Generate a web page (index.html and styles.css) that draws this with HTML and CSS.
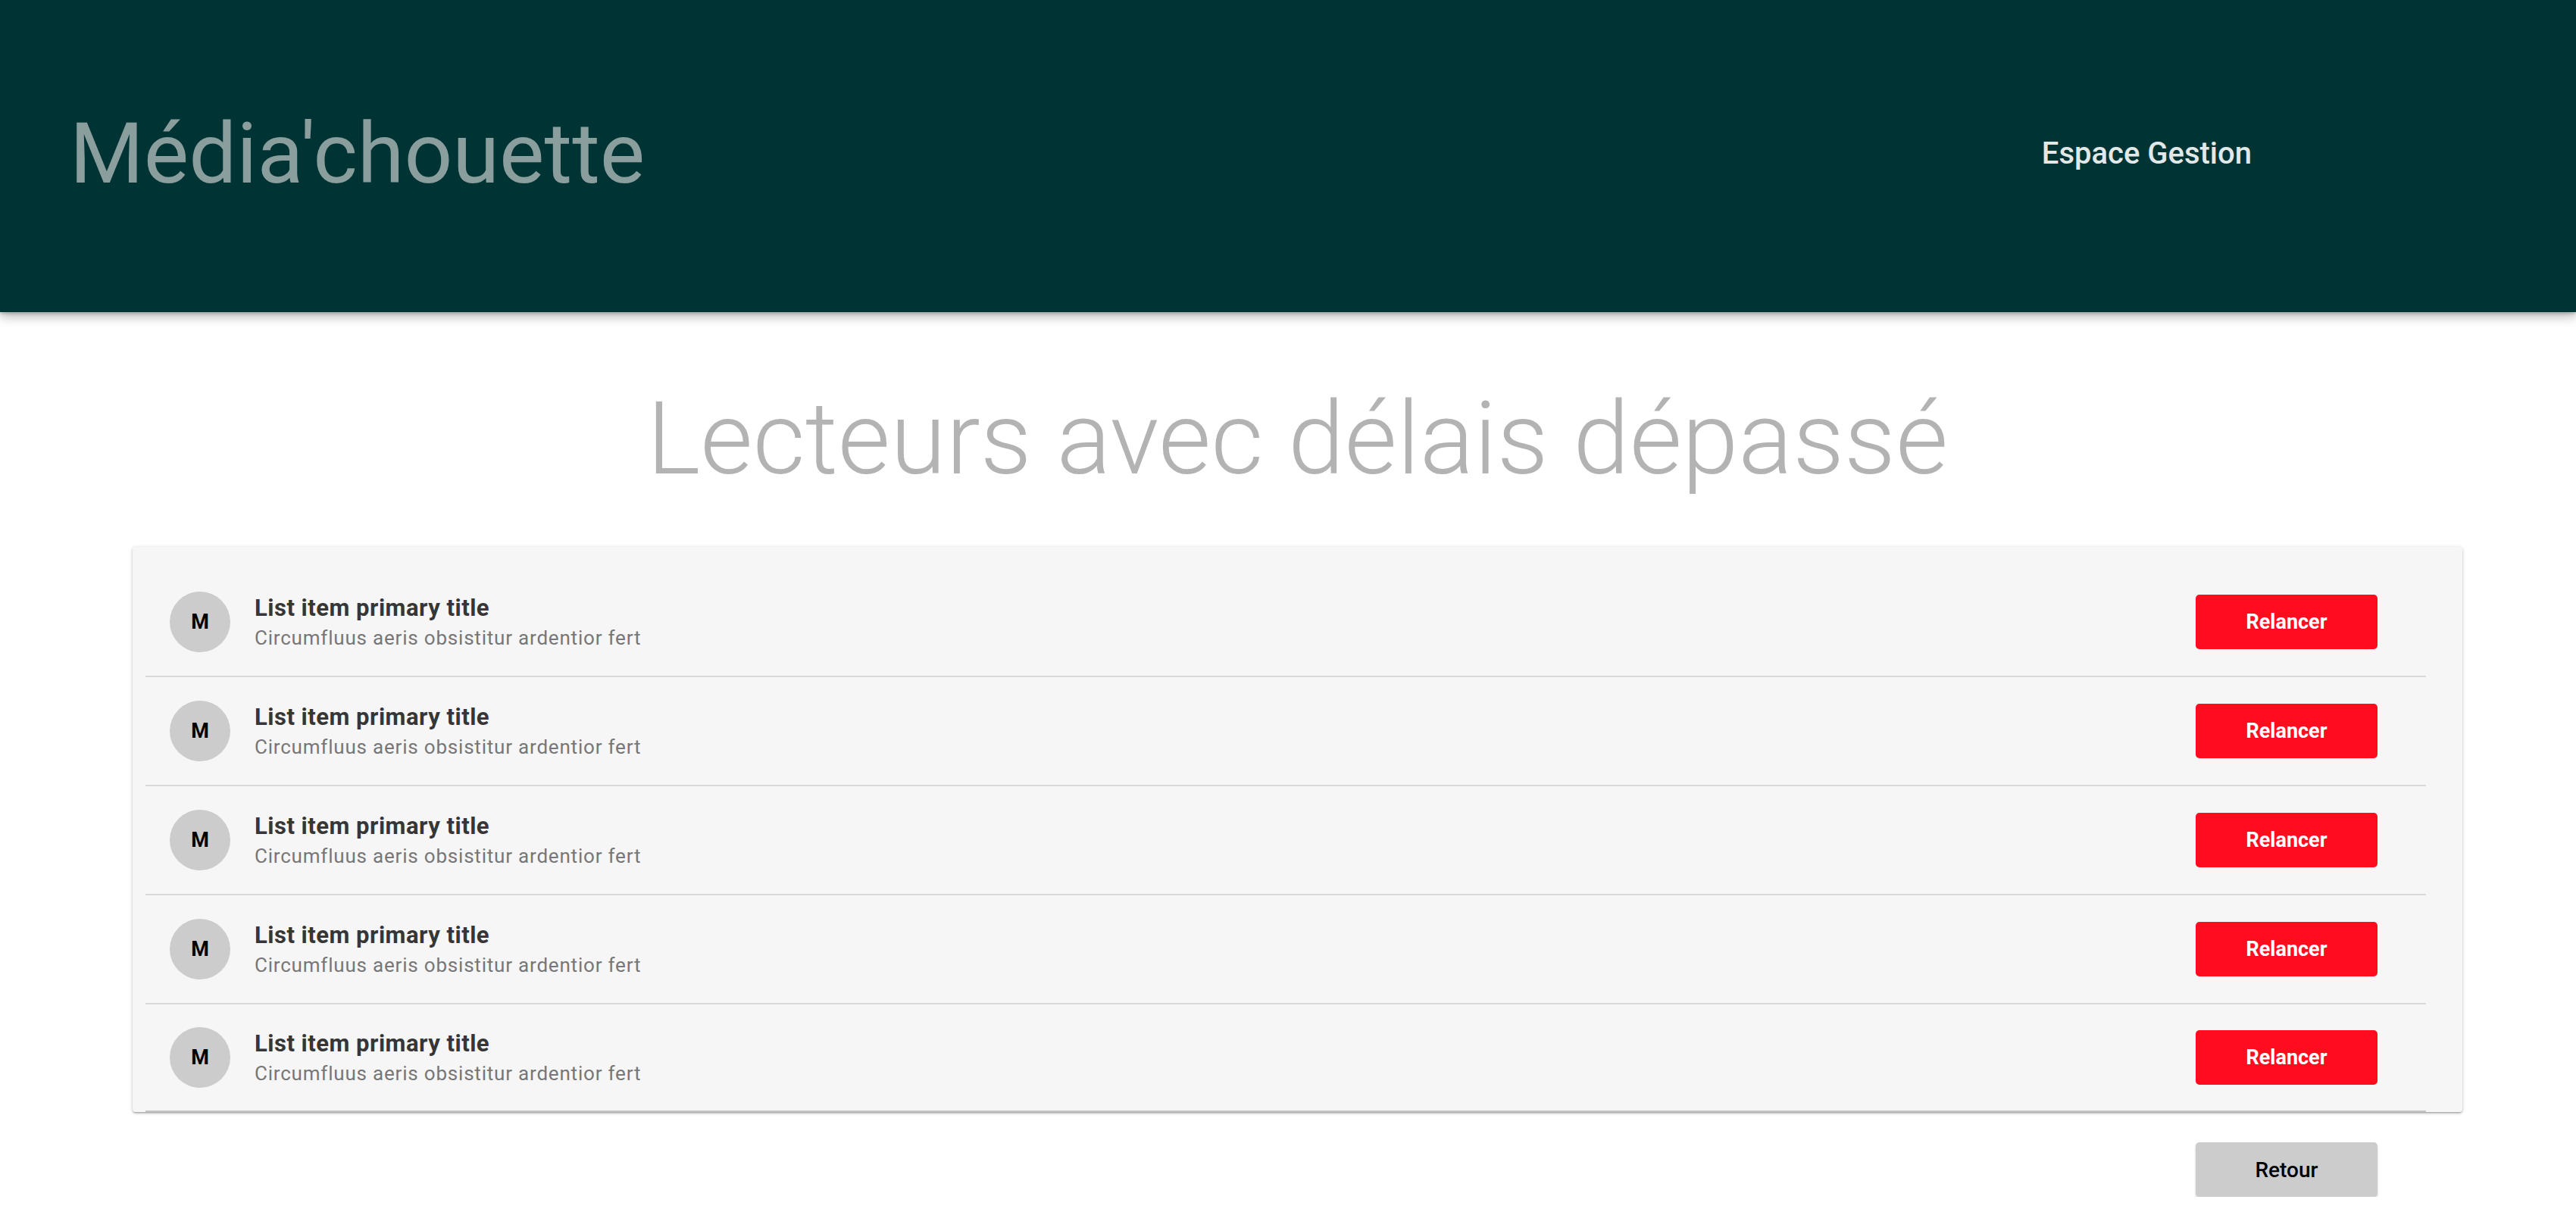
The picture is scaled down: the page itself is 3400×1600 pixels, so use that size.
FILE: index.html
```html
<!DOCTYPE html>
<html lang="fr">
<head>
<meta charset="utf-8">
<title>Média'chouette</title>
<link rel="stylesheet" href="styles.css">
</head>
<body>
<header class="topbar">
  <h1 class="brand">Média'chouette</h1>
  <nav class="nav"><a class="nav-link" href="#">Espace Gestion</a></nav>
</header>
<main class="content">
  <h2 class="page-title">Lecteurs avec délais dépassé</h2>
  <ul class="card list">
    <li class="row">
      <span class="avatar">M</span>
      <div class="text"><div class="primary">List item primary title</div><div class="secondary">Circumfluus aeris obsistitur ardentior fert</div></div>
      <button class="btn btn-red">Relancer</button>
    </li>
    <li class="row">
      <span class="avatar">M</span>
      <div class="text"><div class="primary">List item primary title</div><div class="secondary">Circumfluus aeris obsistitur ardentior fert</div></div>
      <button class="btn btn-red">Relancer</button>
    </li>
    <li class="row">
      <span class="avatar">M</span>
      <div class="text"><div class="primary">List item primary title</div><div class="secondary">Circumfluus aeris obsistitur ardentior fert</div></div>
      <button class="btn btn-red">Relancer</button>
    </li>
    <li class="row">
      <span class="avatar">M</span>
      <div class="text"><div class="primary">List item primary title</div><div class="secondary">Circumfluus aeris obsistitur ardentior fert</div></div>
      <button class="btn btn-red">Relancer</button>
    </li>
    <li class="row">
      <span class="avatar">M</span>
      <div class="text"><div class="primary">List item primary title</div><div class="secondary">Circumfluus aeris obsistitur ardentior fert</div></div>
      <button class="btn btn-red">Relancer</button>
    </li>
  </ul>
  <div class="actions"><button class="btn btn-grey">Retour</button></div>
</main>
</body>
</html>
```
FILE: styles.css
```css
* { box-sizing: border-box; }
html, body { margin: 0; padding: 0; background: #ffffff; }
body { font-family: Roboto, "Liberation Sans", sans-serif; }

.topbar {
  height: 412px;
  background: #003333;
  display: flex;
  align-items: center;
  justify-content: space-between;
  padding: 0 428px 8px 92px;
  box-shadow: 0 6px 14px rgba(0,0,0,0.28), 0 2px 4px rgba(0,0,0,0.2);
  position: relative;
  z-index: 1;
}
.brand {
  margin: 0;
  font-size: 112px;
  font-weight: 400;
  color: #8a9e9e;
  line-height: normal;
}
.nav-link {
  font-size: 40px;
  font-weight: 500;
  color: #e2e8e8;
  text-decoration: none;
}

.content {
  padding: 0 150px 0 175px;
}
.page-title {
  margin: 89px 0 64px;
  text-align: center;
  font-size: 134px;
  font-weight: 300;
  color: #b3b3b3;
  line-height: normal;
}

.card {
  background: #f6f6f6;
  border-radius: 4px;
  box-shadow: 0 2px 2px rgba(0,0,0,0.14), 0 3px 1px -2px rgba(0,0,0,0.12), 0 1px 5px rgba(0,0,0,0.2);
}
.list {
  list-style: none;
  margin: 0;
  padding: 28px 0 0;
}
.row {
  display: flex;
  align-items: center;
  height: 144px;
  margin: 0 48px 0 17px;
  padding: 0 64px 0 32px;
  border-bottom: 2px solid #d9d9d9;
}
.row:last-child { height: 142px; border-bottom-color: #c4c4c4; }
.avatar {
  flex: none;
  width: 80px;
  height: 80px;
  border-radius: 50%;
  background: #cccccc;
  color: #000;
  font-weight: 700;
  font-size: 27px;
  display: flex;
  align-items: center;
  justify-content: center;
}
.text {
  flex: 1;
  margin-left: 32px;
  padding-top: 3px;
}
.primary {
  font-size: 31px;
  font-weight: 700;
  letter-spacing: 0.5px;
  color: #363636;
  line-height: 38px;
}
.secondary {
  font-size: 26px;
  font-weight: 400;
  letter-spacing: 0.8px;
  color: #777777;
  line-height: 40px;
}

.btn {
  width: 240px;
  height: 72px;
  border: none;
  border-radius: 5px;
  font-family: Roboto, "Liberation Sans", sans-serif;
  font-size: 27px;
  font-weight: 700;
  cursor: pointer;
}
.btn-red {
  background: #ff0d1f;
  color: #ffffff;
}
.btn-grey {
  background: #cccccc;
  color: #000000;
  font-weight: 500;
  font-size: 28px;
  box-shadow: 0 2px 3px rgba(0,0,0,0.2);
}
.actions {
  display: flex;
  justify-content: flex-end;
  padding: 40px 112px 0 0;
}
```
